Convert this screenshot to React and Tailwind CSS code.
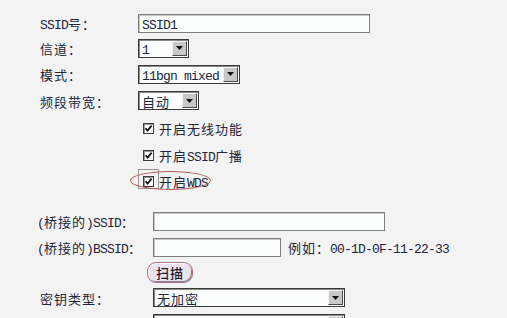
import React from "react";

const cjk = "font-['Noto_Sans_CJK_SC',sans-serif] text-[13px] tracking-[1px]";
const lat = "font-['Liberation_Mono','Noto_Sans_CJK_SC',monospace] text-[13px] tracking-[-0.8px]";

function T({ parts }) {
  return (
    <span className="whitespace-nowrap leading-none">
      {parts.map((p, i) =>
        p[0] === "L" ? (
          <span key={i} className={lat}>{p[1]}</span>
        ) : (
          <span key={i} className={cjk}>{p[1]}</span>
        )
      )}
    </span>
  );
}

function Arrow() {
  return (
    <div className="w-[15px] h-[15px] mr-[1px] shrink-0 bg-[#c8c8c8] border border-t-[#f4f4f4] border-l-[#f4f4f4] border-b-[#4a4a4a] border-r-[#4a4a4a] flex items-center justify-center">
      <svg width="7" height="4" viewBox="0 0 7 4">
        <path d="M0 0H7L3.5 4Z" fill="#111" />
      </svg>
    </div>
  );
}

function Select({ w, children }) {
  return (
    <div className={`${w} h-[19px] flex items-center border border-[#3a3a3a] bg-[#fcfefe] shadow-[inset_1px_1px_0_#8a8a8a]`}>
      <div className="flex-1 pl-[3px] overflow-hidden">{children}</div>
      <Arrow />
    </div>
  );
}

function Input({ w, children }) {
  return (
    <div className={`${w} h-[19px] flex items-center border border-[#7b7f80] bg-[#fcfefe] shadow-[inset_1px_1px_0_#c4c6c6]`}>
      <div className="pl-[3px]">{children}</div>
    </div>
  );
}

function Check() {
  return (
    <div className="w-[11px] h-[11px] border border-[#3c3c3c] bg-[#fdfdfd] shadow-[inset_1px_1px_0_#9a9a9a] flex items-center justify-center shrink-0">
      <svg width="9" height="9" viewBox="0 0 9 9">
        <path d="M1.5 4.2 L3.6 6.6 L7.6 1.6" stroke="#111" strokeWidth="1.7" fill="none" />
      </svg>
    </div>
  );
}

export default function App() {
  return (
    <div className="relative w-[507px] h-[318px] overflow-hidden bg-[#f3f3f3] text-[#22263a]">
      <div className="pt-[11px] flex flex-col">
        <div className="h-[24px] flex items-center">
          <div className="w-[138px] pl-[40px]"><T parts={[["L", "SSID"], ["C", "号："]]} /></div>
          <Input w="w-[232px]"><T parts={[["L", "SSID1"]]} /></Input>
        </div>
        <div className="h-[26px] flex items-center">
          <div className="w-[138px] pl-[40px]"><T parts={[["C", "信道："]]} /></div>
          <Select w="w-[51px]"><T parts={[["L", "1"]]} /></Select>
        </div>
        <div className="h-[26px] flex items-center">
          <div className="w-[138px] pl-[40px]"><T parts={[["C", "模式："]]} /></div>
          <Select w="w-[102px]"><T parts={[["L", "11bgn mixed"]]} /></Select>
        </div>
        <div className="h-[27px] flex items-center">
          <div className="w-[138px] pl-[40px]"><T parts={[["C", "频段带宽："]]} /></div>
          <Select w="w-[61px]"><T parts={[["C", "自动"]]} /></Select>
        </div>
        <div className="h-[28px] flex items-center pl-[143px] gap-[5px]">
          <Check />
          <T parts={[["C", "开启无线功能"]]} />
        </div>
        <div className="h-[26px] flex items-center pl-[143px] gap-[5px]">
          <Check />
          <T parts={[["C", "开启"], ["L", "SSID"], ["C", "广播"]]} />
        </div>
        <div className="h-[26px] flex items-center pl-[143px] gap-[5px]">
          <Check />
          <T parts={[["C", "开启"], ["L", "WDS"]]} />
        </div>
        <div className="h-[14px]" />
        <div className="h-[26px] flex items-center">
          <div className="w-[153px] pl-[37px]"><T parts={[["L", "("], ["C", "桥接的"], ["L", ")SSID"], ["C", "："]]} /></div>
          <Input w="w-[232px]" />
        </div>
        <div className="h-[26px] flex items-center">
          <div className="w-[153px] pl-[37px]"><T parts={[["L", "("], ["C", "桥接的"], ["L", ")BSSID"], ["C", "："]]} /></div>
          <Input w="w-[128px]" />
          <div className="ml-[7px]"><T parts={[["C", "例如："], ["L", "00-1D-0F-11-22-33"]]} /></div>
        </div>
        <div className="h-[25px] flex items-center pl-[147px]">
          <div className="w-[46px] h-[21px] rounded-[9px] border border-[#b0708e] bg-[#ebe4ee] shadow-[inset_1px_1px_0_#ffffff,inset_-1px_-1px_0_#8a8090] flex items-center justify-center">
            <span className="font-['Noto_Sans_CJK_SC',sans-serif] text-[13px] tracking-[1px] font-medium leading-none text-[#1a1a2a]">扫描</span>
          </div>
        </div>
        <div className="h-[25px] flex items-center">
          <div className="w-[153px] pl-[40px]"><T parts={[["C", "密钥类型："]]} /></div>
          <Select w="w-[192px]"><T parts={[["C", "无加密"]]} /></Select>
        </div>
        <div className="h-[26px] flex items-center">
          <div className="w-[153px] pl-[40px]"><T parts={[["L", "WEP"], ["C", "密钥序号："]]} /></div>
          <Select w="w-[192px]"><T parts={[["L", "1"]]} /></Select>
        </div>
      </div>
      <div className="absolute left-[138px] top-[169px] w-[21px] h-[20px] border border-[#9a9292]" />
      <div className="absolute left-[130px] top-[171px] w-[81px] h-[19px] rounded-[50%] border border-[#b35c5c]" />
    </div>
  );
}
